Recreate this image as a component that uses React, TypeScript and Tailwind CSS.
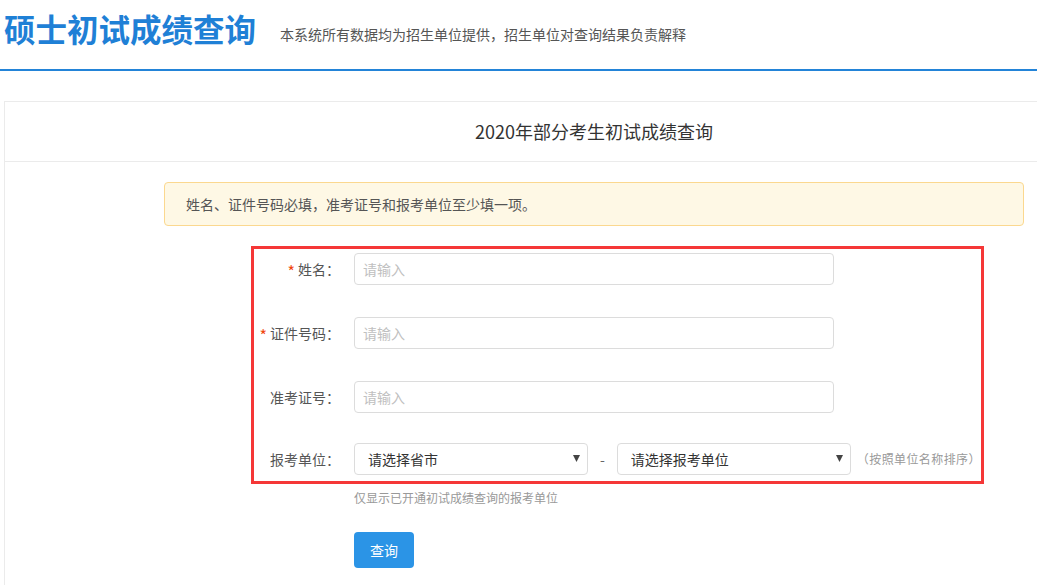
import React from "react";

const font = { fontFamily: '"Noto Sans CJK SC", "Noto Sans", sans-serif' };

function Field({ label, required }: { label: string; required?: boolean }) {
  return (
    <div className="flex items-center">
      <div className="flex w-[86px] shrink-0 items-center justify-end text-[14px] text-[#555]">
        {required && (
          <span className="mr-[3px] mt-[4px] text-[16px] leading-none text-[#f0460e]">*</span>
        )}
        {label}：
      </div>
      <input
        placeholder="请输入"
        className="ml-[14px] h-[32px] w-[480px] rounded-[4px] border border-[#dcdcdc] px-[8px] text-[14px] text-[#333] outline-none placeholder:text-[#c0c0c0]"
      />
    </div>
  );
}

function Select({ text, width }: { text: string; width: string }) {
  return (
    <div
      className={`flex h-[32px] items-center justify-between rounded-[4px] border border-[#dcdcdc] pl-[13px] pr-[7px] text-[14px] text-[#333] ${width}`}
    >
      <span>{text}</span>
      <svg width="7" height="7" viewBox="0 0 7 7" className="mb-[2px]">
        <path d="M0 0 H7 L3.5 7 Z" fill="#444" />
      </svg>
    </div>
  );
}

export default function App() {
  return (
    <div className="h-[585px] w-full overflow-hidden bg-white" style={font}>
      <div className="flex h-[71px] items-start border-b-[2px] border-[#2384d8] pl-[4px]">
        <h1 className="mt-[6px] text-[31.5px] font-bold leading-[44px] text-[#1f80d6]">
          硕士初试成绩查询
        </h1>
        <p className="ml-[24px] mt-[24px] text-[14px] leading-[20px] text-[#555]">
          本系统所有数据均为招生单位提供，招生单位对查询结果负责解释
        </p>
      </div>

      <div className="ml-[4px] mt-[30px] w-[1045px] border border-[#ebebeb] pb-[40px]">
        <div className="flex h-[60px] items-center border-b border-[#ebebeb] pl-[470px] text-[18px] text-[#333]">
          2020年部分考生初试成绩查询
        </div>

        <div className="pl-[159px] pt-[20px]">
          <div className="flex h-[44px] w-[860px] items-center rounded-[4px] border border-[#fbd88f] bg-[#fef8e5] pl-[21px] text-[14px] text-[#555]">
            姓名、证件号码必填，准考证号和报考单位至少填一项。
          </div>

          <div className="ml-[87px] mt-[20px] flex w-[733px] flex-col gap-[32px] border-[3px] border-[#f53737] pb-[6px] pt-[4px]">
            <Field label="姓名" required />
            <Field label="证件号码" required />
            <div className="-mb-[2px]">
              <Field label="准考证号" />
            </div>
            <div className="flex items-center">
              <div className="w-[86px] shrink-0 text-right text-[14px] text-[#555]">
                报考单位：
              </div>
              <div className="ml-[14px]">
                <Select text="请选择省市" width="w-[234px]" />
              </div>
              <span className="mx-[12px] text-[14px] text-[#666]">-</span>
              <Select text="请选择报考单位" width="w-[234px]" />
              <span className="ml-[6px] text-[12px] tracking-[0.4px] text-[#999]">（按照单位名称排序）</span>
            </div>
          </div>

          <p className="ml-[190px] mt-[5px] text-[12px] leading-[18px] text-[#999]">
            仅显示已开通初试成绩查询的报考单位
          </p>
          <button className="ml-[190px] mt-[25px] h-[36px] w-[60px] rounded-[4px] bg-[#2b94e6] text-[14px] text-white">
            查询
          </button>
        </div>
      </div>
    </div>
  );
}
